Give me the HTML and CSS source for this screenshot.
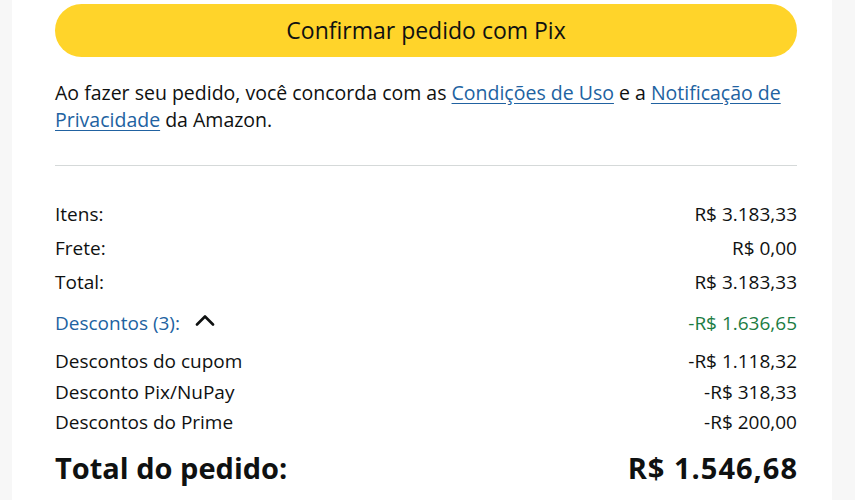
FILE: index.html
```html
<!DOCTYPE html>
<html lang="pt-BR">
<head>
    <meta charset="UTF-8">
    <meta name="viewport" content="width=device-width, initial-scale=1.0">
    <title>Resumo do pedido</title>
    <link rel="stylesheet" href="styles.css">
</head>
<body>
    <div class="order-card">
        <button class="confirm-btn">Confirmar pedido com Pix</button>

        <p class="terms">
            Ao fazer seu pedido, você concorda com as <a href="#">Condições de Uso</a> e a <a href="#">Notificação de Privacidade</a> da Amazon.
        </p>

        <hr class="divider">

        <div class="summary">
            <div class="row"><span>Itens:</span><span>R$ 3.183,33</span></div>
            <div class="row"><span>Frete:</span><span>R$ 0,00</span></div>
            <div class="row"><span>Total:</span><span>R$ 3.183,33</span></div>

            <div class="row discounts">
                <span class="discounts-toggle">
                    <span class="discounts-label">Descontos (3):</span>
                    <svg class="chevron" width="20" height="12" viewBox="0 0 20 12">
                        <path d="M2 10.5 L10 2.5 L18 10.5" fill="none" stroke="#0f1111" stroke-width="2.6" stroke-linecap="round" stroke-linejoin="round"/>
                    </svg>
                </span>
                <span class="discount-total">-R$ 1.636,65</span>
            </div>

            <div class="discount-list">
                <div class="row sub"><span>Descontos do cupom</span><span>-R$ 1.118,32</span></div>
                <div class="row sub"><span>Desconto Pix/NuPay</span><span>-R$ 318,33</span></div>
                <div class="row sub"><span>Descontos do Prime</span><span>-R$ 200,00</span></div>
            </div>

            <div class="row grand-total"><span>Total do pedido:</span><span class="grand-value">R$ 1.546,68</span></div>
        </div>
    </div>
</body>
</html>
```

FILE: styles.css
```css
* {
    margin: 0;
    padding: 0;
    box-sizing: border-box;
}

body {
    font-family: 'Open Sans', 'Liberation Sans', sans-serif;
    background: #f7f7f7;
    color: #0f1111;
    height: 100vh;
    overflow: hidden;
}

.order-card {
    background: white;
    margin: 0 23px 0 12px;
    padding: 4px 35px 0 43px;
    height: 100%;
}

.confirm-btn {
    display: block;
    width: 100%;
    height: 53px;
    background: #ffd42a;
    border: none;
    border-radius: 27px;
    font-family: inherit;
    font-size: 23px;
    color: #0f1111;
    padding-bottom: 2px;
    cursor: pointer;
}

.terms {
    margin-top: 21.5px;
    font-size: 19.5px;
    line-height: 27px;
}

.terms a {
    color: #2162a1;
    text-decoration: underline;
    text-underline-offset: 3px;
}

.divider {
    border: none;
    border-top: 1px solid #d5d9d9;
    margin-top: 32.5px;
}

.summary {
    padding-top: 36px;
}

.row {
    display: flex;
    justify-content: space-between;
    align-items: center;
    font-size: 19px;
    line-height: 24px;
    margin-bottom: 10px;
}

.discounts {
    margin-top: 17px;
    margin-bottom: 14px;
}

.discounts-toggle {
    display: flex;
    align-items: center;
    gap: 15px;
}

.discounts-label {
    color: #2162a1;
}

.chevron {
    margin-top: -6px;
}

.discount-total {
    color: #1b7c43;
}

.row.sub {
    margin-bottom: 6.5px;
}

.grand-total {
    margin-top: 16px;
    font-size: 29px;
    font-weight: 700;
    line-height: 36px;
}

.grand-value {
    letter-spacing: 1px;
    margin-right: -1px;
}
```
